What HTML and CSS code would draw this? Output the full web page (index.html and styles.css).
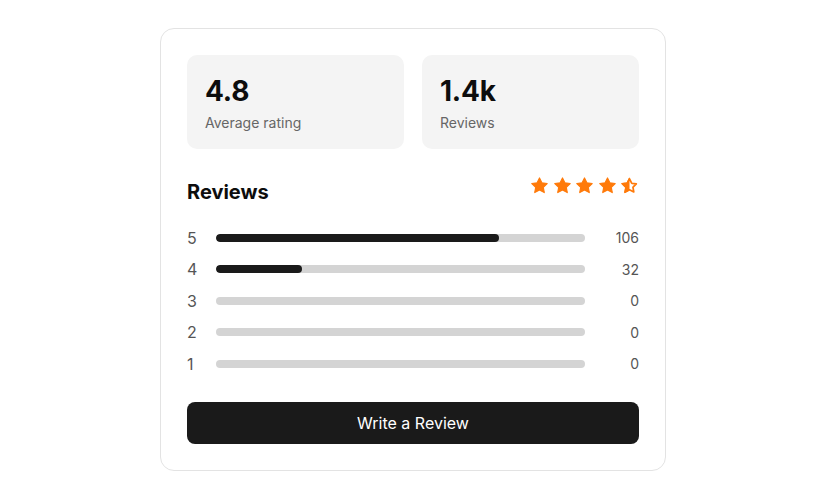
FILE: index.html
```html
<!DOCTYPE html>
<html lang="en">
<head>
<meta charset="utf-8">
<title>Reviews</title>
<link rel="stylesheet" href="styles.css">
</head>
<body>
<div class="card">
  <div class="stats">
    <div class="stat">
      <div class="stat-value">4.8</div>
      <div class="stat-label">Average rating</div>
    </div>
    <div class="stat">
      <div class="stat-value">1.4k</div>
      <div class="stat-label">Reviews</div>
    </div>
  </div>
  <div class="header">
    <h2 class="title">Reviews</h2>
    <div class="stars">
      <svg class="star" viewBox="0 0 24 24"><polygon points="12,2.5 15,8.6 21.7,9.5 16.8,14.2 18,20.9 12,17.7 6,20.9 7.2,14.2 2.3,9.5 9,8.6"/></svg>
      <svg class="star" viewBox="0 0 24 24"><polygon points="12,2.5 15,8.6 21.7,9.5 16.8,14.2 18,20.9 12,17.7 6,20.9 7.2,14.2 2.3,9.5 9,8.6"/></svg>
      <svg class="star" viewBox="0 0 24 24"><polygon points="12,2.5 15,8.6 21.7,9.5 16.8,14.2 18,20.9 12,17.7 6,20.9 7.2,14.2 2.3,9.5 9,8.6"/></svg>
      <svg class="star" viewBox="0 0 24 24"><polygon points="12,2.5 15,8.6 21.7,9.5 16.8,14.2 18,20.9 12,17.7 6,20.9 7.2,14.2 2.3,9.5 9,8.6"/></svg>
      <svg class="star star-half" viewBox="0 0 24 24">
        <defs><clipPath id="lefthalf"><rect x="0" y="0" width="12" height="24"/></clipPath></defs>
        <polygon class="outline" points="12,3.6 14.4,8.5 14.7,9.1 15.3,9.2 20.6,10 16.8,13.8 16.3,14.3 16.5,14.9 17.4,20.2 12.6,17.7 12,17.4 11.4,17.7 6.6,20.2 7.5,14.9 7.7,14.3 7.2,13.8 3.4,10 8.7,9.2 9.3,9.1 9.6,8.5"/>
        <polygon class="fillhalf" clip-path="url(#lefthalf)" points="12,2.5 15,8.6 21.7,9.5 16.8,14.2 18,20.9 12,17.7 6,20.9 7.2,14.2 2.3,9.5 9,8.6"/>
      </svg>
    </div>
  </div>
  <div class="rows">
    <div class="row"><span class="num">5</span><div class="bar"><div class="fill" style="width:76.8%"></div></div><span class="count">106</span></div>
    <div class="row"><span class="num">4</span><div class="bar"><div class="fill" style="width:23.2%"></div></div><span class="count">32</span></div>
    <div class="row"><span class="num">3</span><div class="bar"><div class="fill" style="width:0%"></div></div><span class="count">0</span></div>
    <div class="row"><span class="num">2</span><div class="bar"><div class="fill" style="width:0%"></div></div><span class="count">0</span></div>
    <div class="row"><span class="num">1</span><div class="bar"><div class="fill" style="width:0%"></div></div><span class="count">0</span></div>
  </div>
  <button class="btn">Write a Review</button>
</div>
</body>
</html>
```

FILE: styles.css
```css
* { box-sizing: border-box; }
html, body { margin: 0; height: 100%; }
body {
  font-family: Inter, "Noto Sans", sans-serif;
  background: #ffffff;
  color: #111;
  display: flex;
  align-items: flex-start;
  justify-content: center;
  padding: 28px 2px 0 0;
}
.card {
  width: 506px;
  border: 1px solid #e3e3e3;
  border-radius: 14px;
  padding: 26px;
  background: #fff;
  display: flex;
  flex-direction: column;
}
.stats {
  display: grid;
  grid-template-columns: 1fr 1fr;
  gap: 18px;
}
.stat {
  background: #f4f4f4;
  border-radius: 10px;
  height: 94px;
  padding: 19px 18px 0 18px;
}
.stat-value {
  font-size: 28px;
  font-weight: 700;
  line-height: 34px;
  color: #0d0d0d;
  letter-spacing: -0.2px;
}
.stat-label {
  margin-top: 6px;
  font-size: 14px;
  line-height: 18px;
  color: #666;
}
.header {
  margin-top: 28px;
  display: flex;
  justify-content: space-between;
  align-items: flex-start;
}
.title {
  margin: 0;
  font-size: 20px;
  font-weight: 700;
  line-height: 30px;
  color: #0d0d0d;
}
.stars {
  display: flex;
  gap: 3.5px;
  margin-top: -1px;
}
.star {
  width: 19px;
  height: 19px;
  display: block;
}
.star polygon {
  fill: #ff7a0a;
  stroke: #ff7a0a;
  stroke-width: 1.5;
  stroke-linejoin: round;
}
.star-half polygon.outline {
  fill: none;
  stroke: #ff7a0a;
  stroke-width: 2.2;
}
.rows {
  margin-top: 15px;
  display: flex;
  flex-direction: column;
}
.row {
  height: 31.5px;
  display: flex;
  align-items: center;
}
.num {
  width: 29px;
  font-size: 16px;
  color: #555;
}
.bar {
  flex: 1;
  height: 8px;
  background: #d4d4d4;
  border-radius: 4px;
  overflow: hidden;
}
.fill {
  height: 100%;
  background: #1a1a1a;
  border-radius: 4px;
}
.count {
  width: 54px;
  text-align: right;
  font-size: 14px;
  color: #555;
}
.btn {
  margin-top: 22px;
  height: 42px;
  width: 100%;
  border: none;
  border-radius: 8px;
  background: #1a1a1a;
  color: #fff;
  font-family: Inter, "Noto Sans", sans-serif;
  font-size: 16px;
  font-weight: 400;
  cursor: pointer;
}
```
